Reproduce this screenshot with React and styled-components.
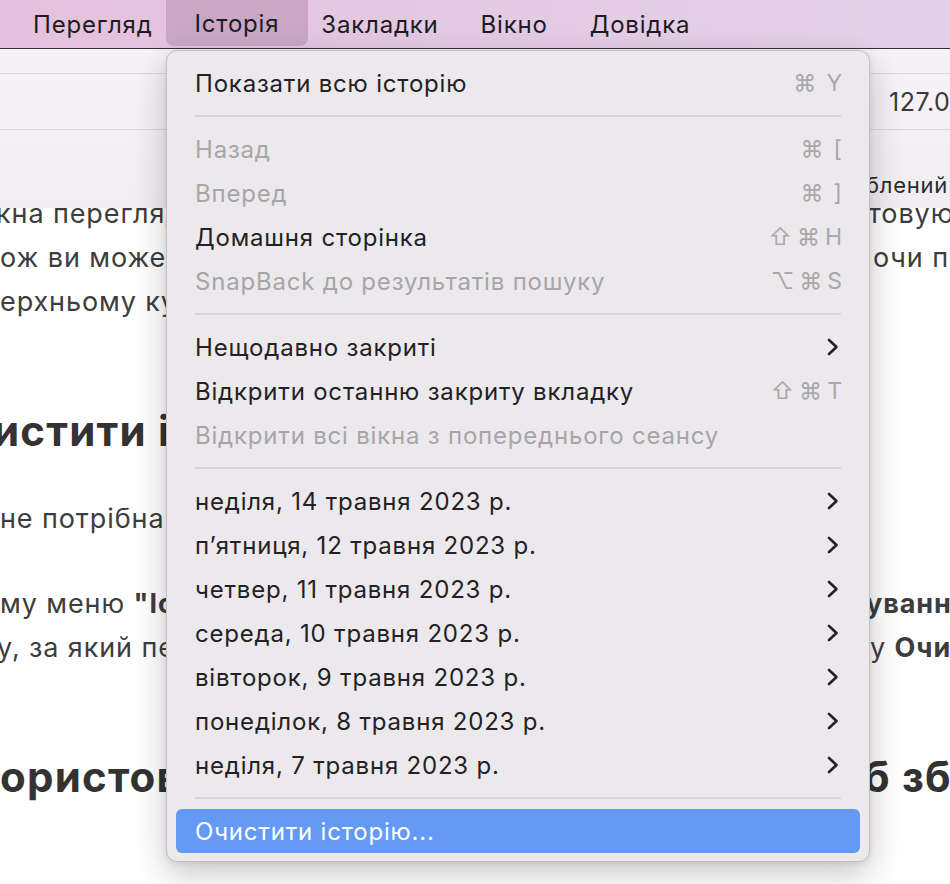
import React from 'react'
import styled, { createGlobalStyle } from 'styled-components'

const GlobalStyle = createGlobalStyle`
  html, body {
    margin: 0;
    padding: 0;
    background: #ffffff;
    overflow: hidden;
  }
`

const Screen = styled.div`
  position: relative;
  width: 950px;
  height: 884px;
  overflow: hidden;
  font-family: 'Inter', 'Noto Sans', 'DejaVu Sans', sans-serif;
  background: #ffffff;
`

const MenuBar = styled.div`
  display: flex;
  align-items: stretch;
  height: 48px;
  padding-left: 12px;
  border-bottom: 1px solid #3d2c3a;
  background: linear-gradient(90deg, #e4c0dc 0%, #e4c8e2 40%, #e3d3e8 100%);
`

const BarItem = styled.div`
  display: flex;
  align-items: center;
  padding: ${({ $active }) => ($active ? '0 29px' : '0 21px')};
  margin: ${({ $active }) => ($active ? '0 -8px 2px' : '0')};
  border-radius: 0 0 8px 8px;
  background: ${({ $active }) => ($active ? '#c9a7c5' : 'transparent')};
  color: #1e1b1e;
  font-size: 24px;
  letter-spacing: 0.8px;
`

const Toolbar = styled.div`
  display: flex;
  flex-direction: column;
  height: 159px;
  background: linear-gradient(180deg, #f6f3f7 0%, #f1eef2 100%);
`

const TabStrip = styled.div`
  height: 24px;
`

const AddressRow = styled.div`
  display: flex;
  align-items: center;
  height: 55px;
  padding-left: 889px;
  border-top: 1px solid #dcd8dc;
  border-bottom: 1px solid #dcd8dc;
  color: #3b393b;
  font-size: 25px;
  letter-spacing: 0.5px;
  white-space: nowrap;
`

const BookmarkRow = styled.div`
  display: flex;
  align-items: flex-end;
  flex: 1;
  padding: 0 0 10px 819px;
  color: #2c2a2c;
  font-size: 22px;
  letter-spacing: 0.7px;
  white-space: nowrap;
`

const Page = styled.div`
  overflow: hidden;
  color: #3d3d3d;
`

const Para = styled.div`
  margin: -17px 0 41px;
  &:not(:first-child) {
    margin-top: 0;
  }
`

const Line = styled.div`
  display: flex;
  height: 44px;
  align-items: center;
  font-size: 27px;
  letter-spacing: 0.9px;
  white-space: nowrap;
`

const Heading = styled.div`
  display: flex;
  height: 50px;
  align-items: center;
  margin: 82px 0 41px;
  font-size: 42px;
  font-weight: 700;
  letter-spacing: 1.2px;
  color: #333333;
  white-space: nowrap;
`

const Left = styled.span`
  flex: 0 0 840px;
  overflow: hidden;
  margin-left: ${({ $shift }) => $shift || 0}px;
`

const Right = styled.span`
  padding-left: ${({ $x }) => $x - 840}px;
`

const Menu = styled.div`
  position: absolute;
  top: 50px;
  left: 166px;
  width: 684px;
  padding: 10px 9px 8px;
  border: 1px solid #c3bfc3;
  border-radius: 11px;
  background: #ece9ed;
  box-shadow: 0 12px 34px rgba(0, 0, 0, 0.22), 0 2px 6px rgba(0, 0, 0, 0.08);
  z-index: 2;
`

const Row = styled.div`
  display: flex;
  align-items: center;
  justify-content: space-between;
  height: 44px;
  padding: 0 18px 0 19px;
  border-radius: 6px;
  font-size: 24px;
  letter-spacing: 0.8px;
  color: ${({ $disabled, $active }) =>
    $active ? '#ffffff' : $disabled ? '#a7a5a8' : '#232123'};
  background: ${({ $active }) => ($active ? '#649af5' : 'transparent')};
`

const Shortcut = styled.span`
  display: flex;
  align-items: center;
  gap: ${({ $wide }) => ($wide ? 10 : 5)}px;
  color: #a9a7aa;
  font-size: 23px;
  letter-spacing: 0;
  font-family: 'Inter', 'DejaVu Sans', sans-serif;
`

const Separator = styled.div`
  height: 22px;
  display: flex;
  align-items: center;
  padding: 0 19px;
  &::after {
    content: '';
    flex: 1;
    height: 2px;
    background: #d8d5d8;
  }
`

const ChevronBox = styled.span`
  display: flex;
  margin-right: 3px;
`

const Chevron = () => (
  <ChevronBox>
    <svg width="12" height="18" viewBox="0 0 12 18">
      <path d="M2 2 L9.5 9 L2 16" fill="none" stroke="#222022" strokeWidth="2.6" strokeLinecap="round" strokeLinejoin="round" />
    </svg>
  </ChevronBox>
)

const Keys = ({ keys, wide }) => (
  <Shortcut $wide={wide}>
    {keys.map((k, i) => (
      <span key={i}>{k}</span>
    ))}
  </Shortcut>
)

const days = [
  'неділя, 14 травня 2023 р.',
  'п’ятниця, 12 травня 2023 р.',
  'четвер, 11 травня 2023 р.',
  'середа, 10 травня 2023 р.',
  'вівторок, 9 травня 2023 р.',
  'понеділок, 8 травня 2023 р.',
  'неділя, 7 травня 2023 р.',
]

const App = () => {
  return (
    <Screen>
      <GlobalStyle />
      <MenuBar>
        <BarItem>Перегляд</BarItem>
        <BarItem $active>Історія</BarItem>
        <BarItem>Закладки</BarItem>
        <BarItem>Вікно</BarItem>
        <BarItem>Довідка</BarItem>
      </MenuBar>

      <Toolbar>
        <TabStrip />
        <AddressRow>127.0.0.1</AddressRow>
        <BookmarkRow>Улюблений</BookmarkRow>
      </Toolbar>

      <Page>
        <Para>
          <Line><Left $shift={-4}>кна перегляду історії</Left><Right $x={856}>стовую</Right></Line>
          <Line><Left>ож ви можете</Left><Right $x={873}>очи панель</Right></Line>
          <Line><Left>ерхньому куті</Left><Right $x={900}></Right></Line>
        </Para>
        <Heading><Left $shift={-7}>истити історію</Left><Right $x={900}></Right></Heading>
        <Para>
          <Line><Left>не потрібна історія</Left><Right $x={900}></Right></Line>
        </Para>
        <Para>
          <Line><Left>му меню <b>"Історія"</b></Left><Right $x={866}><b>ування</b></Right></Line>
          <Line><Left $shift={-3}>у, за який період</Left><Right $x={873}>у <b>Очистити</b></Right></Line>
        </Para>
        <Heading><Left>ористовувати</Left><Right $x={864}>б збереження</Right></Heading>
      </Page>

      <Menu>
        <Row>Показати всю історію<Keys keys={['⌘', 'Y']} wide /></Row>
        <Separator />
        <Row $disabled>Назад<Keys keys={['⌘', '[']} wide /></Row>
        <Row $disabled>Вперед<Keys keys={['⌘', ']']} wide /></Row>
        <Row>Домашня сторінка<Keys keys={['⇧', '⌘', 'H']} /></Row>
        <Row $disabled>SnapBack до результатів пошуку<Keys keys={['⌥', '⌘', 'S']} /></Row>
        <Separator />
        <Row>Нещодавно закриті<Chevron /></Row>
        <Row>Відкрити останню закриту вкладку<Keys keys={['⇧', '⌘', 'T']} /></Row>
        <Row $disabled>Відкрити всі вікна з попереднього сеансу</Row>
        <Separator />
        {days.map((d) => (
          <Row key={d}>{d}<Chevron /></Row>
        ))}
        <Separator />
        <Row $active>Очистити історію...</Row>
      </Menu>
    </Screen>
  )
}

export default App
